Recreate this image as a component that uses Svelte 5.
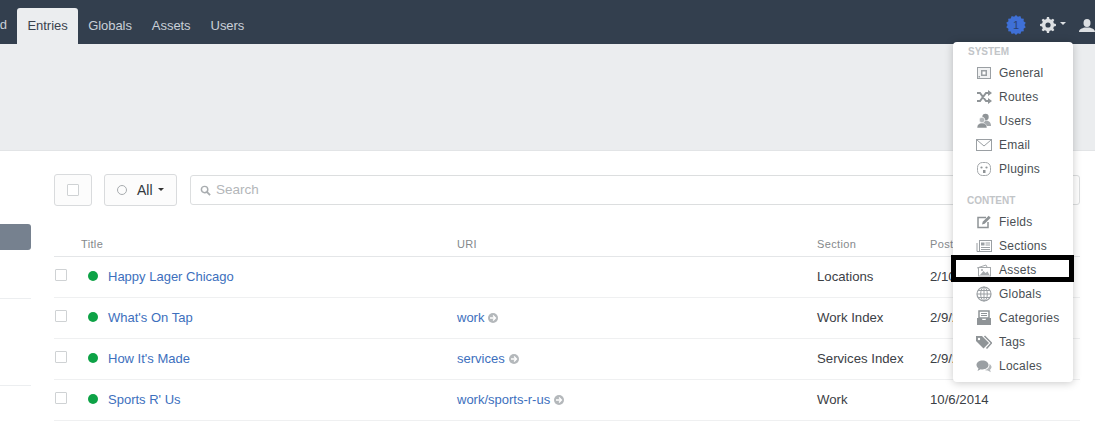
<script>
    const navItems = [
        { label: 'Entries', active: true },
        { label: 'Globals' },
        { label: 'Assets' },
        { label: 'Users' }
    ];

    const rows = [
        { title: 'Happy Lager Chicago', uri: '', section: 'Locations', date: '2/10/2015' },
        { title: "What's On Tap", uri: 'work', section: 'Work Index', date: '2/9/2015' },
        { title: "How It's Made", uri: 'services', section: 'Services Index', date: '2/9/2015' },
        { title: 'Sports R\' Us', uri: 'work/sports-r-us', section: 'Work', date: '10/6/2014' }
    ];

    const systemLinks = ['General', 'Routes', 'Users', 'Email', 'Plugins'];
    const contentLinks = ['Fields', 'Sections', 'Assets', 'Globals', 'Categories', 'Tags', 'Locales'];

    // jagged edge of the notification badge
    function burst(spikes) {
        let points = [];
        for (let i = 0; i < spikes * 2; i++) {
            const r = i % 2 ? 8.4 : 10;
            const a = (Math.PI * i) / spikes;
            points.push(`${(10 + r * Math.sin(a)).toFixed(2)},${(10 - r * Math.cos(a)).toFixed(2)}`);
        }
        return points.join(' ');
    }

    // cog outline with round hole left to the fill rule
    function cog(teeth) {
        let d = '';
        for (let i = 0; i < teeth; i++) {
            const a = (Math.PI * 2 * i) / teeth;
            const pts = [[-0.24, 6.1], [-0.13, 8], [0.13, 8], [0.24, 6.1]].map(([o, r]) =>
                `${(8 + r * Math.sin(a + o)).toFixed(2)} ${(8 - r * Math.cos(a + o)).toFixed(2)}`
            );
            d += (i === 0 ? 'M' : 'L') + pts.join('L');
        }
        return d + 'Z M8 5.400a2.600 2.600 0 1 0 0 5.200a2.600 2.600 0 1 0 0-5.200Z';
    }
</script>

{#snippet menuIcon(name)}
    <svg class="menu-icon" viewBox="0 0 16 16" width="16" height="16">
        {#if name === 'General'}
            <rect x="1.500" y="2.500" width="13" height="11" fill="#f1f2f3" stroke="#9a9fa3" />
            <rect x="5" y="5" width="6" height="6" fill="#9a9fa3" />
            <rect x="6.500" y="6.500" width="3" height="3" fill="#fff" />
            <rect x="2.500" y="11" width="1.500" height="1.500" fill="#9a9fa3" />
        {:else if name === 'Routes'}
            <path d="M1 4h3l6 8h3M1 12h3l6-8h3" fill="none" stroke="#8f9497" stroke-width="2" />
            <path d="M12 1l4 3-4 3zM12 9l4 3-4 3z" fill="#8f9497" />
        {:else if name === 'Users'}
            <circle cx="9.500" cy="4" r="3.200" fill="#8f9497" />
            <path d="M4 13c0-4 2.500-5.500 5.500-5.500S15 9 15 13z" fill="#a5a9ac" />
            <circle cx="6" cy="7" r="2.800" fill="#b3b7ba" stroke="#fff" stroke-width="0.700" />
            <path d="M1 15c0-3.500 2-5 5-5s5 1.500 5 5z" fill="#8f9497" stroke="#fff" stroke-width="0.500" />
        {:else if name === 'Email'}
            <rect x="0.500" y="2.500" width="15" height="11" fill="none" stroke="#9a9fa3" />
            <path d="M1 3l7 6 7-6" fill="none" stroke="#9a9fa3" />
        {:else if name === 'Plugins'}
            <rect x="1.500" y="1.500" width="13" height="13" rx="5" fill="none" stroke="#a5a9ac" />
            <circle cx="5.500" cy="6.500" r="1.100" fill="#8f9497" />
            <circle cx="10.500" cy="6.500" r="1.100" fill="#8f9497" />
            <rect x="7" y="9" width="2.500" height="3" fill="#8f9497" />
        {:else if name === 'Fields'}
            <path d="M12 8v5.500H2v-10h8" fill="none" stroke="#8f9497" stroke-width="1.500" />
            <path d="M6 10.500l.7-2.700 6-6 2 2-6 6z" fill="#8f9497" />
        {:else if name === 'Sections'}
            <rect x="3.500" y="2.500" width="12" height="11" fill="none" stroke="#9a9fa3" />
            <path d="M1 5v8.500h2.500" fill="none" stroke="#9a9fa3" />
            <rect x="5" y="4.500" width="3.500" height="3" fill="#9a9fa3" />
            <path d="M9.500 5h4.500M9.500 7h4.500M5 9.500h9M5 11.500h9" stroke="#9a9fa3" />
        {:else if name === 'Assets'}
            <path d="M1 6l9-3 1 2" fill="none" stroke="#a5a9ac" />
            <rect x="2.500" y="5.500" width="12" height="8.500" fill="none" stroke="#a5a9ac" />
            <path d="M4 13l3.500-4 2 2 2-1.500 2 3.500z" fill="#a5a9ac" />
            <circle cx="6" cy="8" r="1" fill="#a5a9ac" />
        {:else if name === 'Globals'}
            <circle cx="8" cy="8" r="7" fill="none" stroke="#9a9fa3" stroke-width="1.200" />
            <ellipse cx="8" cy="8" rx="3.300" ry="7" fill="none" stroke="#9a9fa3" />
            <path d="M8 1v14M1 8h14M2 4.500h12M2 11.500h12" stroke="#9a9fa3" />
        {:else if name === 'Categories'}
            <path d="M3 1h10v7H3z" fill="#fff" stroke="#8f9497" stroke-width="1.500" />
            <path d="M5 3.500h6M5 5.500h6" stroke="#8f9497" />
            <path d="M1 8h4.500l1 2h3l1-2H15v7H1z" fill="#8f9497" />
        {:else if name === 'Tags'}
            <path d="M0 2h6l7 7-5.500 5.500L0 7z" fill="#8f9497" />
            <path d="M8.500 2l7 7-5 5.500" fill="none" stroke="#8f9497" stroke-width="1.500" />
            <circle cx="3" cy="5" r="1.200" fill="#fff" />
        {:else if name === 'Locales'}
            <path d="M6.500 2.500C3 2.500 0.500 4.500 0.500 7c0 1.500 1 2.800 2 3.500L1.500 13l3.200-1.800c.6.100 1.200.200 1.800.200 3.500 0 6-2 6-4.400s-2.500-4.500-6-4.500z" fill="#9a9fa3" />
            <path d="M13.500 6c1.500 1 2.200 2.300 2 3.500-.2 1-.8 1.700-1.500 2.300l.8 2.400-3-1.800c-1.200.2-2.300 0-3.200-.4 2.800-.4 5.200-2.500 4.900-6z" fill="#b3b7ba" />
        {/if}
    </svg>
{/snippet}

<div class="page">
    <nav class="topbar">
        <div class="nav-links">
            <a class="nav-cut" href="#d">d</a>
            {#each navItems as item}
                <a class="nav-link" class:active={item.active} href="#n">{item.label}</a>
            {/each}
        </div>
        <div class="nav-tools">
            <svg class="badge" viewBox="0 0 20 20" width="20" height="20">
                <polygon fill="#3f70d6" points={burst(14)} />
                <text x="10" y="14" text-anchor="middle" class="badge-num">1</text>
            </svg>
            <svg class="gear" viewBox="0 0 16 16" width="16" height="16">
                <path fill="#dde0e3" fill-rule="evenodd" d={cog(8)} />
            </svg>
            <span class="caret light"></span>
            <svg class="user" viewBox="0 0 16 13" width="16" height="13">
                <ellipse cx="8" cy="4" rx="3.500" ry="4" fill="#dde0e3" />
                <path d="M0 13c0-3 3-3.500 5.500-4.500h5C13 9.500 16 10 16 13z" fill="#dde0e3" />
            </svg>
        </div>
    </nav>

    <header class="banner"></header>

    <main class="body">
        <aside class="side">
            <div class="side-selected"></div>
            <div class="side-line first"></div>
            <div class="side-line second"></div>
        </aside>

        <section class="content">
            <div class="toolbar">
                <button class="btn check-btn"><span class="box"></span></button>
                <button class="btn all-btn"><span class="ring"></span>All<span class="caret"></span></button>
                <div class="search">
                    <svg viewBox="0 0 12 12" width="11" height="11">
                        <circle cx="5" cy="5" r="3.500" fill="none" stroke="#a8acaf" stroke-width="1.600" />
                        <path d="M7.500 7.500L11 11" stroke="#a8acaf" stroke-width="2" />
                    </svg>
                    <span>Search</span>
                </div>
            </div>

            <div class="table">
                <div class="row head">
                    <span></span>
                    <span class="head-title">Title</span>
                    <span>URI</span>
                    <span>Section</span>
                    <span>Post Date</span>
                </div>
                {#each rows as row}
                    <div class="row">
                        <span class="box small"></span>
                        <span class="title"><i class="dot"></i><a href="#t">{row.title}</a></span>
                        <span class="uri">
                            {#if row.uri}
                                <a href="#u">{row.uri}</a>
                                <svg viewBox="0 0 10 10" width="10" height="10">
                                    <circle cx="5" cy="5" r="5" fill="#b4b8bb" />
                                    <path d="M2 5h5M5 2.500L7.500 5 5 7.500" fill="none" stroke="#fff" stroke-width="1.300" />
                                </svg>
                            {/if}
                        </span>
                        <span>{row.section}</span>
                        <span>{row.date}</span>
                    </div>
                {/each}
            </div>
        </section>
    </main>

    <div class="menu">
        <h6>SYSTEM</h6>
        {#each systemLinks as link}
            <a class="menu-link" href="#m">{@render menuIcon(link)}{link}</a>
        {/each}
        <h6 class="second-head">CONTENT</h6>
        {#each contentLinks as link}
            <a class="menu-link" href="#m">{@render menuIcon(link)}{link}</a>
        {/each}
    </div>

    <div class="highlight"></div>
</div>

<style>
    :global(body) {
        margin: 0;
        background: #fff;
    }

    .page {
        position: relative;
        height: 421px;
        overflow: hidden;
        font-family: "Liberation Sans", Arial, sans-serif;
        font-size: 13px;
        color: #3b4045;
    }

    a {
        text-decoration: none;
    }

    .topbar {
        display: flex;
        justify-content: space-between;
        height: 44px;
        background: #333f4e;
    }

    .nav-links {
        display: flex;
        align-items: flex-end;
    }

    .nav-cut {
        width: 7px;
        margin-right: 10px;
        height: 44px;
        line-height: 50px;
        color: #c9d0d8;
        overflow: hidden;
        direction: rtl;
    }

    .nav-link {
        height: 36px;
        line-height: 35px;
        padding: 0 10px;
        color: #c9d0d8;
        letter-spacing: -0.05px;
        border-radius: 3px 3px 0 0;
    }

    .nav-link.active {
        background: #ebedef;
        color: #3a424d;
        padding: 0 10.500px;
    }

    .nav-tools {
        display: flex;
        align-items: center;
        padding-top: 6px;
    }

    .badge-num {
        font-size: 11px;
        fill: #2a3f6d;
    }

    .gear {
        margin-left: 14px;
    }

    .caret {
        display: inline-block;
        width: 0;
        height: 0;
        margin-left: 5px;
        border-left: 3px solid transparent;
        border-right: 3px solid transparent;
        border-top: 3px solid #333;
        vertical-align: middle;
    }

    .caret.light {
        margin: 0 13px 3px 4px;
        border-top-color: #dde0e3;
    }

    .banner {
        height: 106px;
        background: #ebedef;
        border-bottom: 1px solid #e2e4e6;
    }

    .body {
        display: flex;
    }

    .side {
        width: 31px;
        flex: none;
        margin-right: 23px;
        padding-top: 73px;
    }

    .side-selected {
        height: 26px;
        background: #76818f;
        border-radius: 0 3px 3px 0;
    }

    .side-line {
        border-top: 1px solid #eceef0;
    }

    .side-line.first {
        margin-top: 48px;
    }

    .side-line.second {
        margin-top: 86px;
    }

    .content {
        width: 1026px;
        padding-top: 23px;
    }

    .toolbar {
        display: flex;
        align-items: center;
        height: 31px;
    }

    .btn {
        display: flex;
        align-items: center;
        height: 32px;
        background: #fcfcfc;
        border: 1px solid #d9dbdd;
        border-radius: 3px;
        font: inherit;
        font-size: 14px;
        color: #33383d;
    }

    .check-btn {
        width: 38px;
        justify-content: center;
        margin-right: 12px;
    }

    .all-btn {
        width: 73px;
        padding: 0 0 0 12px;
        margin-right: 13px;
    }

    .box {
        display: block;
        width: 10px;
        height: 10px;
        background: #fff;
        border: 1px solid #cfd2d4;
        border-radius: 1px;
    }

    .ring {
        width: 8px;
        height: 8px;
        margin-right: 10px;
        border: 1px solid #a8acaf;
        border-radius: 50%;
    }

    .search {
        display: flex;
        align-items: center;
        gap: 5px;
        flex: 1;
        height: 28px;
        padding-left: 9px;
        border: 1px solid #dcdedf;
        border-radius: 3px;
        color: #b3b6b9;
        font-size: 13.500px;
    }

    .search svg {
        margin-top: 2px;
    }

    .table {
        margin-top: 26px;
    }

    .row {
        display: grid;
        grid-template-columns: 34px 369px 360px 113px 1fr;
        align-items: center;
        box-sizing: border-box;
        height: 41px;
        padding-bottom: 2px;
        border-bottom: 1px solid #eff0f1;
        font-size: 13.200px;
    }

    .row.head {
        height: 26px;
        padding-bottom: 0;
        border-bottom-color: #e4e6e8;
        font-size: 11px;
        color: #85898c;
        letter-spacing: 0.35px;
    }

    .head-title {
        margin-left: -7px;
    }

    .box.small {
        margin-left: 1px;
        margin-top: -2px;
    }

    .title {
        display: flex;
        align-items: center;
        gap: 10px;
    }

    .dot {
        width: 10px;
        height: 10px;
        border-radius: 50%;
        background: #0da246;
    }

    .title a,
    .uri a {
        font-size: 13px;
        color: #3d6fbd;
    }

    .uri {
        display: flex;
        align-items: center;
        gap: 4px;
    }

    .uri svg {
        margin-top: 2px;
    }

    .menu {
        position: absolute;
        left: 953px;
        top: 42px;
        box-sizing: border-box;
        width: 120px;
        height: 340px;
        padding-top: 4px;
        background: #fff;
        border-radius: 4px;
        box-shadow: 0 1px 8px rgba(0, 0, 0, 0.22);
    }

    h6 {
        margin: 0 0 3px 15px;
        font-size: 10px;
        line-height: 12px;
        font-weight: 700;
        color: #c2c5c8;
    }

    .second-head {
        margin-top: 14px;
        margin-left: 14px;
        margin-bottom: 3px;
    }

    .menu-link {
        display: flex;
        align-items: center;
        gap: 7px;
        height: 24px;
        padding-left: 23px;
        font-size: 12px;
        letter-spacing: 0.25px;
        color: #4a4f54;
    }

    .menu-icon {
        flex: none;
    }

    .highlight {
        position: absolute;
        left: 951px;
        top: 255px;
        box-sizing: border-box;
        width: 123px;
        height: 27px;
        border: 5px solid #000;
    }
</style>
